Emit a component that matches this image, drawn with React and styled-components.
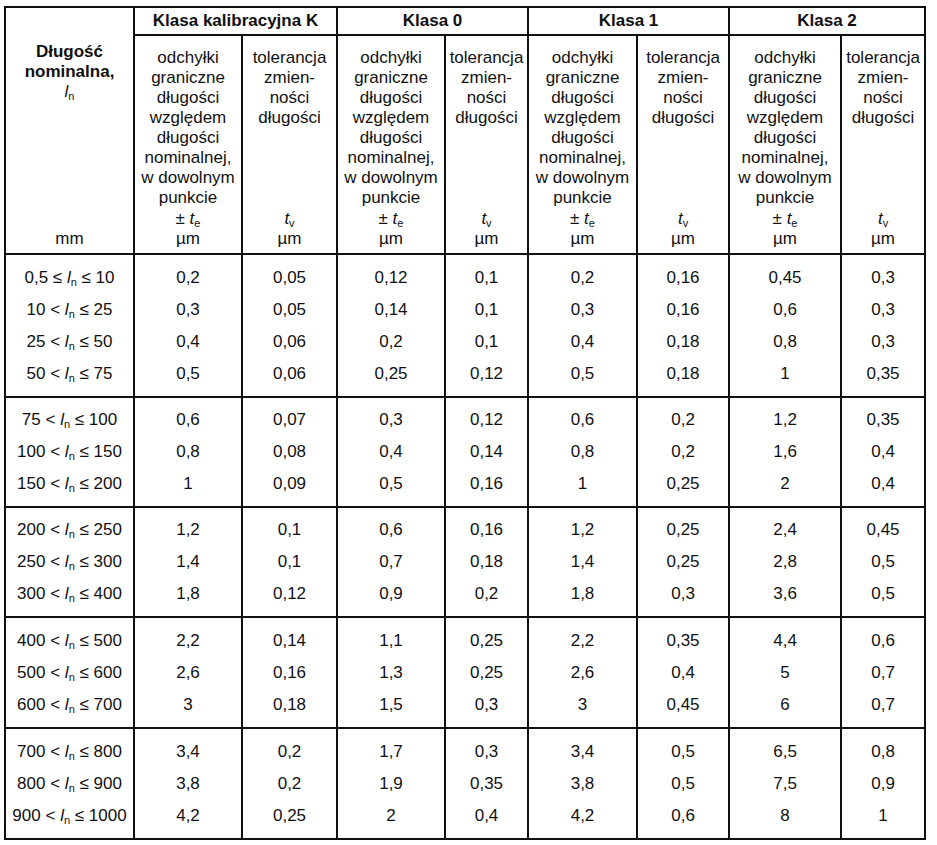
import React from "react";
import styled, { createGlobalStyle } from "styled-components";

const GlobalStyle = createGlobalStyle`
  html, body {
    margin: 0;
    padding: 0;
    background: #ffffff;
  }
  body {
    font-family: "Liberation Sans", Arial, sans-serif;
    color: #111111;
  }
`;

const Page = styled.div`
  padding: 6px 0 0 4px;
`;

const Table = styled.table`
  border-collapse: collapse;
  table-layout: fixed;
  width: 921px;
  font-size: 17px;
  border: 2px solid #111;
`;

const Col = styled.col`
  width: ${(p) => p.$w}px;
`;

const Cell = styled.td`
  border-left: 2px solid #111;
  border-right: 2px solid #111;
  text-align: center;
  padding: ${(p) => (p.$first ? p.$padTop : 0)}px 0
    ${(p) => (p.$last ? p.$padBottom : 0)}px;
  line-height: 32px;
  height: 32px;
  white-space: nowrap;
`;

const GroupHead = styled.th`
  border: 2px solid #111;
  font-weight: bold;
  font-size: 17px;
  line-height: 20px;
  padding: 3px 0;
`;

const SubHead = styled.th`
  border: 2px solid #111;
  font-weight: normal;
  line-height: 20px;
  padding: ${(p) => p.$padTop || 12}px 0 4px;
  vertical-align: top;
`;

const HeadStack = styled.div`
  height: ${(p) => p.$h}px;
  display: flex;
  flex-direction: column;
  justify-content: space-between;
  align-items: center;
  white-space: nowrap;
`;

const Bold = styled.div`
  font-weight: bold;
`;

const Plain = styled.div`
  font-weight: normal;
`;

const Group = styled.tbody`
  border-top: 2px solid #111;
`;

const It = styled.i`
  font-style: italic;
`;

const Sub = styled.sub`
  font-size: 11px;
  font-style: normal;
  vertical-align: -3px;
  line-height: 0;
`;

const Sym = ({ base, idx }) => (
  <>
    <It>{base}</It>
    <Sub>{idx}</Sub>
  </>
);

const widths = [129, 108, 95, 108, 83, 109, 92, 112, 84];

const classes = [
  "Klasa kalibracyjna K",
  "Klasa 0",
  "Klasa 1",
  "Klasa 2",
];

const groups = [
  {
    top: 7,
    bottom: 6,
    rows: [
      ["0,5", "≤", "10", "0,2", "0,05", "0,12", "0,1", "0,2", "0,16", "0,45", "0,3"],
      ["10", "<", "25", "0,3", "0,05", "0,14", "0,1", "0,3", "0,16", "0,6", "0,3"],
      ["25", "<", "50", "0,4", "0,06", "0,2", "0,1", "0,4", "0,18", "0,8", "0,3"],
      ["50", "<", "75", "0,5", "0,06", "0,25", "0,12", "0,5", "0,18", "1", "0,35"],
    ],
  },
  {
    top: 6,
    bottom: 6,
    rows: [
      ["75", "<", "100", "0,6", "0,07", "0,3", "0,12", "0,6", "0,2", "1,2", "0,35"],
      ["100", "<", "150", "0,8", "0,08", "0,4", "0,14", "0,8", "0,2", "1,6", "0,4"],
      ["150", "<", "200", "1", "0,09", "0,5", "0,16", "1", "0,25", "2", "0,4"],
    ],
  },
  {
    top: 6,
    bottom: 6,
    rows: [
      ["200", "<", "250", "1,2", "0,1", "0,6", "0,16", "1,2", "0,25", "2,4", "0,45"],
      ["250", "<", "300", "1,4", "0,1", "0,7", "0,18", "1,4", "0,25", "2,8", "0,5"],
      ["300", "<", "400", "1,8", "0,12", "0,9", "0,2", "1,8", "0,3", "3,6", "0,5"],
    ],
  },
  {
    top: 7,
    bottom: 6,
    rows: [
      ["400", "<", "500", "2,2", "0,14", "1,1", "0,25", "2,2", "0,35", "4,4", "0,6"],
      ["500", "<", "600", "2,6", "0,16", "1,3", "0,25", "2,6", "0,4", "5", "0,7"],
      ["600", "<", "700", "3", "0,18", "1,5", "0,3", "3", "0,45", "6", "0,7"],
    ],
  },
  {
    top: 7,
    bottom: 6,
    rows: [
      ["700", "<", "800", "3,4", "0,2", "1,7", "0,3", "3,4", "0,5", "6,5", "0,8"],
      ["800", "<", "900", "3,8", "0,2", "1,9", "0,35", "3,8", "0,5", "7,5", "0,9"],
      ["900", "<", "1000", "4,2", "0,25", "2", "0,4", "4,2", "0,6", "8", "1"],
    ],
  },
];

const DeviationHead = () => (
  <SubHead>
    <HeadStack $h={201}>
      <div>
        odchyłki
        <br />
        graniczne
        <br />
        długości
        <br />
        względem
        <br />
        długości
        <br />
        nominalnej,
        <br />w dowolnym
        <br />
        punkcie
      </div>
      <div>
        ± <Sym base="t" idx="e" />
        <br />
        µm
      </div>
    </HeadStack>
  </SubHead>
);

const ToleranceHead = () => (
  <SubHead>
    <HeadStack $h={201}>
      <div>
        tolerancja
        <br />
        zmien-
        <br />
        ności
        <br />
        długości
      </div>
      <div>
        <Sym base="t" idx="v" />
        <br />
        µm
      </div>
    </HeadStack>
  </SubHead>
);

const App = () => (
  <>
    <GlobalStyle />
    <Page>
      <Table>
        <colgroup>
          {widths.map((w, i) => (
            <Col key={i} $w={w} />
          ))}
        </colgroup>
        <thead>
          <tr>
            <SubHead rowSpan={2} $padTop={34}>
              <HeadStack $h={207}>
                <div>
                  <Bold>Długość</Bold>
                  <Bold>nominalna,</Bold>
                  <Plain>
                    <Sym base="l" idx="n" />
                  </Plain>
                </div>
                <Plain>mm</Plain>
              </HeadStack>
            </SubHead>
            {classes.map((c) => (
              <GroupHead key={c} colSpan={2}>
                {c}
              </GroupHead>
            ))}
          </tr>
          <tr>
            {classes.map((c) => (
              <React.Fragment key={c}>
                <DeviationHead />
                <ToleranceHead />
              </React.Fragment>
            ))}
          </tr>
        </thead>
        {groups.map((g, gi) => (
          <Group key={gi}>
            {g.rows.map((r, ri) => {
              const first = ri === 0;
              const last = ri === g.rows.length - 1;
              const [from, op, to, ...vals] = r;
              return (
                <tr key={ri}>
                  <Cell
                    $first={first}
                    $last={last}
                    $padTop={g.top}
                    $padBottom={g.bottom}
                  >
                    {from} {op} <Sym base="l" idx="n" /> ≤ {to}
                  </Cell>
                  {vals.map((v, vi) => (
                    <Cell
                      key={vi}
                      $first={first}
                      $last={last}
                      $padTop={g.top}
                      $padBottom={g.bottom}
                    >
                      {v}
                    </Cell>
                  ))}
                </tr>
              );
            })}
          </Group>
        ))}
      </Table>
    </Page>
  </>
);

export default App;
